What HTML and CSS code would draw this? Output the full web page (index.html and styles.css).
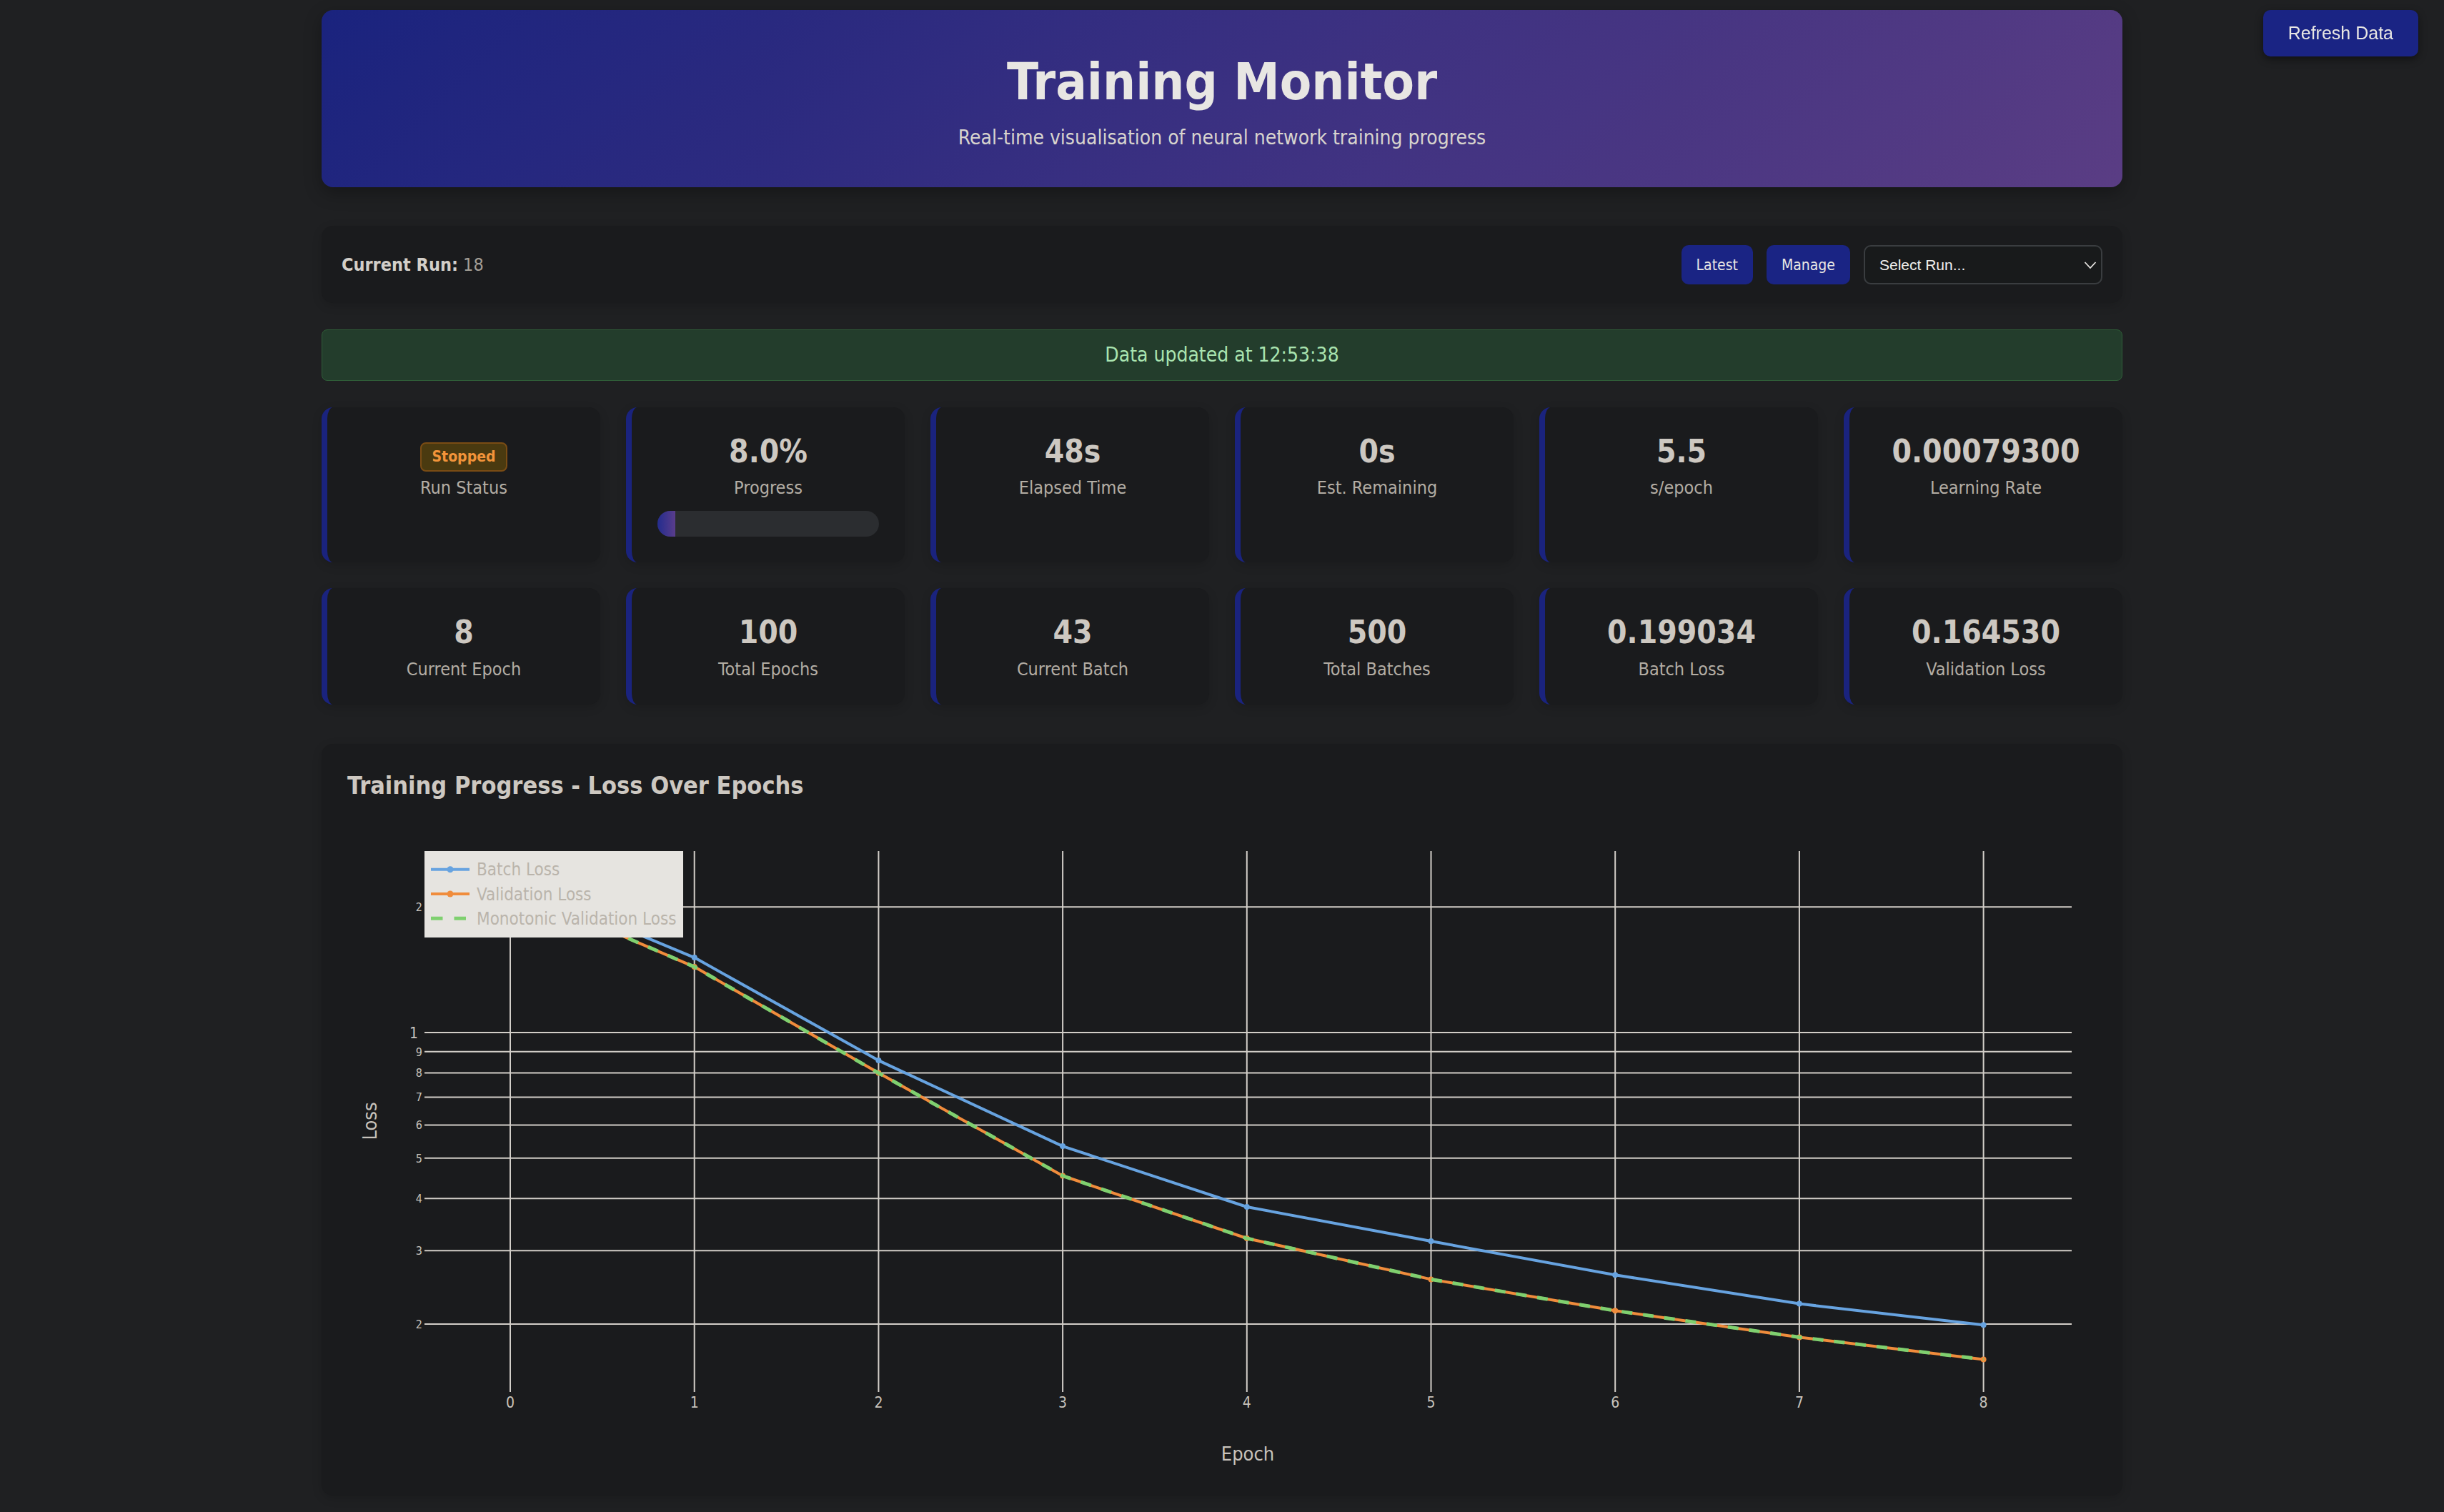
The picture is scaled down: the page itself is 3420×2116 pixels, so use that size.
FILE: index.html
```html
<!DOCTYPE html>
<html lang="en">
<head>
<meta charset="utf-8">
<title>Training Monitor</title>
<link rel="stylesheet" href="styles.css">
</head>
<body>
<button class="refresh-btn">Refresh Data</button>
<div class="container">
  <header class="header">
    <h1 class="title">Training Monitor</h1>
    <p class="subtitle">Real-time visualisation of neural network training progress</p>
  </header>

  <section class="run-bar">
    <div class="run-info"><strong>Current Run:</strong> <span class="run-id">18</span></div>
    <div class="run-controls">
      <button class="btn">Latest</button>
      <button class="btn">Manage</button>
      <div class="select-box">
        <span>Select Run...</span>
        <svg class="chevron" width="18" height="12" viewBox="0 0 18 12"><path d="M1.5 2 L9 10 L16.5 2" fill="none" stroke="#e8e6e3" stroke-width="1.8"/></svg>
      </div>
    </div>
  </section>

  <div class="status-bar">Data updated at 12:53:38</div>

  <div class="stats-grid stats-primary">
    <div class="stat-card">
      <div class="badge-wrap"><span class="badge">Stopped</span></div>
      <div class="stat-label">Run Status</div>
    </div>
    <div class="stat-card">
      <div class="stat-value">8.0%</div>
      <div class="stat-label">Progress</div>
      <div class="progress-track"><div class="progress-fill" style="width: 8%"></div></div>
    </div>
    <div class="stat-card">
      <div class="stat-value">48s</div>
      <div class="stat-label">Elapsed Time</div>
    </div>
    <div class="stat-card">
      <div class="stat-value">0s</div>
      <div class="stat-label">Est. Remaining</div>
    </div>
    <div class="stat-card">
      <div class="stat-value">5.5</div>
      <div class="stat-label">s/epoch</div>
    </div>
    <div class="stat-card">
      <div class="stat-value">0.00079300</div>
      <div class="stat-label">Learning Rate</div>
    </div>
  </div>

  <div class="stats-grid stats-secondary">
    <div class="stat-card">
      <div class="stat-value">8</div>
      <div class="stat-label">Current Epoch</div>
    </div>
    <div class="stat-card">
      <div class="stat-value">100</div>
      <div class="stat-label">Total Epochs</div>
    </div>
    <div class="stat-card">
      <div class="stat-value">43</div>
      <div class="stat-label">Current Batch</div>
    </div>
    <div class="stat-card">
      <div class="stat-value">500</div>
      <div class="stat-label">Total Batches</div>
    </div>
    <div class="stat-card">
      <div class="stat-value">0.199034</div>
      <div class="stat-label">Batch Loss</div>
    </div>
    <div class="stat-card">
      <div class="stat-value">0.164530</div>
      <div class="stat-label">Validation Loss</div>
    </div>
  </div>

  <section class="chart-card">
    <h3 class="chart-title">Training Progress - Loss Over Epochs</h3>
    <svg class="chart" width="2448" height="916" viewBox="0 0 2448 916">
      <path class="grid" d="M108 128.3H2413 M108 304H2413 M108 330.7H2413 M108 360.6H2413 M108 394.4H2413 M108 433.5H2413 M108 479.7H2413 M108 536.3H2413 M108 609.2H2413 M108 712H2413
        M228 50V807 M485.7 50V807 M743.4 50V807 M1001.1 50V807 M1258.8 50V807 M1516.5 50V807 M1774.2 50V807 M2031.9 50V807 M2289.6 50V807"/>

      <g class="ytick">
        <text class="minor" x="105" y="134">2</text>
        <text class="major" x="99" y="311.6">1</text>
        <text class="minor" x="105" y="336.5">9</text>
        <text class="minor" x="105" y="366.4">8</text>
        <text class="minor" x="105" y="400.2">7</text>
        <text class="minor" x="105" y="439.3">6</text>
        <text class="minor" x="105" y="485.5">5</text>
        <text class="minor" x="105" y="542.1">4</text>
        <text class="minor" x="105" y="615">3</text>
        <text class="minor" x="105" y="717.8">2</text>
      </g>
      <g class="xtick">
        <text x="228" y="829">0</text>
        <text x="485.7" y="829">1</text>
        <text x="743.4" y="829">2</text>
        <text x="1001.1" y="829">3</text>
        <text x="1258.8" y="829">4</text>
        <text x="1516.5" y="829">5</text>
        <text x="1774.2" y="829">6</text>
        <text x="2031.9" y="829">7</text>
        <text x="2289.6" y="829">8</text>
      </g>
      <text class="axis-title" x="1260" y="903">Epoch</text>
      <text class="axis-title" transform="translate(41 428) rotate(-90)">Loss</text>

      <polyline class="line-batch" points="228,91.8 485.7,199.1 743.4,343.1 1001.1,463.1 1258.8,548 1516.5,596 1774.2,643.3 2031.9,683.6 2289.6,713.2"/>
      <g class="pts-batch">
        <circle cx="228" cy="91.8" r="4"/><circle cx="485.7" cy="199.1" r="4"/><circle cx="743.4" cy="343.1" r="4"/><circle cx="1001.1" cy="463.1" r="4"/><circle cx="1258.8" cy="548" r="4"/><circle cx="1516.5" cy="596" r="4"/><circle cx="1774.2" cy="643.3" r="4"/><circle cx="2031.9" cy="683.6" r="4"/><circle cx="2289.6" cy="713.2" r="4"/>
      </g>
      <polyline class="line-val" points="228,101 485.7,212.1 743.4,360.6 1001.1,504.5 1258.8,592 1516.5,649.4 1774.2,693.3 2031.9,730.4 2289.6,761.4"/>
      <g class="pts-val">
        <circle cx="228" cy="101" r="4"/><circle cx="485.7" cy="212.1" r="4"/><circle cx="743.4" cy="360.6" r="4"/><circle cx="1001.1" cy="504.5" r="4"/><circle cx="1258.8" cy="592" r="4"/><circle cx="1516.5" cy="649.4" r="4"/><circle cx="1774.2" cy="693.3" r="4"/><circle cx="2031.9" cy="730.4" r="4"/><circle cx="2289.6" cy="761.4" r="4"/>
      </g>
      <polyline class="line-mono" points="228,101 485.7,212.1 743.4,360.6 1001.1,504.5 1258.8,592 1516.5,649.4 1774.2,693.3 2031.9,730.4 2289.6,761.4"/>

      <g class="legend">
        <rect class="legend-bg" x="108" y="50" width="362" height="121"/>
        <line class="line-batch" x1="117" y1="75.7" x2="171" y2="75.7"/>
        <circle class="dot-batch" cx="144" cy="75.7" r="4.5"/>
        <text class="legend-text" x="181" y="84">Batch Loss</text>
        <line class="line-val" x1="117" y1="110" x2="171" y2="110"/>
        <circle class="dot-val" cx="144" cy="110" r="4.5"/>
        <text class="legend-text" x="181" y="118.5">Validation Loss</text>
        <line class="line-mono legend-dash" x1="117" y1="144.3" x2="171" y2="144.3"/>
        <text class="legend-text" x="181" y="152.7">Monotonic Validation Loss</text>
      </g>
    </svg>
  </section>
</div>
</body>
</html>
```

FILE: styles.css
```css
* {
  box-sizing: border-box;
}

html,
body {
  margin: 0;
}

body {
  background: #1f2022;
  color: #e8e6e3;
  font-family: "DejaVu Sans Condensed", "DejaVu Sans", sans-serif;
}

.container {
  width: 2520px;
  margin: 0 auto;
  padding: 14px 0 24px;
}

/* Floating refresh button */
.refresh-btn {
  position: fixed;
  top: 14px;
  right: 36px;
  height: 65px;
  padding: 0 35px;
  border: none;
  border-radius: 10px;
  background: #1a2484;
  color: #e8e6e3;
  font-family: "Liberation Sans", Arial, sans-serif;
  font-size: 25px;
  box-shadow: 0 4px 12px rgba(0, 0, 0, 0.45);
}

/* Header */
.header {
  background: linear-gradient(135deg, #1a237e 0%, #5a3d84 100%);
  border-radius: 16px;
  padding: 56px 40px 53px;
  text-align: center;
  box-shadow: 0 8px 24px rgba(0, 0, 0, 0.3);
}

.title {
  margin: 0 0 17px;
  font-size: 72px;
  line-height: 88.8px;
  font-weight: 700;
  color: #e8e6e3;
}

.subtitle {
  margin: 0;
  font-size: 28px;
  line-height: 33.6px;
  color: #d8d4ce;
}

/* Run bar */
.run-bar {
  margin-top: 54px;
  background: #1a1b1d;
  border-radius: 16px;
  padding: 27px 28px 26px;
  display: flex;
  align-items: center;
  justify-content: space-between;
  box-shadow: 0 4px 14px rgba(0, 0, 0, 0.15);
}

.run-info {
  font-size: 25px;
  color: #a39e95;
}

.run-info strong {
  color: #d3cfc9;
}

.run-controls {
  display: flex;
  align-items: center;
  gap: 19px;
}

.btn {
  height: 55px;
  padding: 0 21px;
  border: none;
  border-radius: 10px;
  background: #1a2484;
  color: #e8e6e3;
  font-family: "DejaVu Sans Condensed", "DejaVu Sans", sans-serif;
  font-size: 21px;
}

.select-box {
  width: 334px;
  height: 55px;
  border: 2px solid #3a3d40;
  border-radius: 10px;
  background: #181a1b;
  display: flex;
  align-items: center;
  justify-content: space-between;
  padding: 0 6px 0 20px;
  font-family: "Liberation Sans", Arial, sans-serif;
  font-size: 21px;
  color: #f2f0ed;
}

.chevron {
  display: block;
}

/* Status */
.status-bar {
  margin-top: 37px;
  background: #233d2c;
  border: 1px solid #2f5d38;
  border-radius: 8px;
  padding: 18px;
  text-align: center;
  font-size: 28px;
  line-height: 34px;
  color: #a9e4b0;
}

/* Stat cards */
.stats-grid {
  display: grid;
  grid-template-columns: repeat(6, 1fr);
  gap: 36px;
}

.stats-primary {
  margin-top: 37px;
}

.stats-secondary {
  margin-top: 36px;
}

.stat-card {
  background: #1a1b1d;
  border-left: 8px solid #1a237e;
  border-radius: 16px;
  padding: 36px 36px 34px;
  text-align: center;
  box-shadow: 0 4px 14px rgba(0, 0, 0, 0.15);
}

.stats-primary .stat-card {
  padding-bottom: 36px;
}

.stat-value {
  font-size: 44px;
  line-height: 52.8px;
  font-weight: 700;
  color: #cdc8c1;
  margin-bottom: 9px;
}

.stats-secondary .stat-value {
  margin-bottom: 10px;
}

.stat-label {
  font-size: 25px;
  line-height: 30px;
  color: #b3ada4;
}

.badge-wrap {
  height: 61.8px;
  display: flex;
  justify-content: center;
  align-items: flex-start;
  padding-top: 13px;
}

.badge {
  display: inline-block;
  height: 41px;
  padding: 0 14px;
  border: 2px solid #7a4c14;
  border-radius: 8px;
  background: #4a3a10;
  color: #f2943a;
  font-weight: 700;
  font-size: 21px;
  line-height: 37px;
}

.progress-track {
  margin-top: 17px;
  height: 36px;
  border-radius: 18px;
  background: #2b2d30;
  overflow: hidden;
}

.progress-fill {
  height: 100%;
  background: linear-gradient(90deg, #232c8e, #5a3d8c);
}

/* Chart */
.chart-card {
  margin-top: 55px;
  background: #1a1b1d;
  border-radius: 16px;
  padding: 37px 36px 36px;
  box-shadow: 0 4px 14px rgba(0, 0, 0, 0.15);
}

.chart-title {
  margin: 0 0 21px;
  font-size: 34px;
  line-height: 42px;
  font-weight: 700;
  color: #cdc8c1;
}

.chart {
  display: block;
}

.chart .grid {
  fill: none;
  stroke: #d2cec8;
  stroke-width: 2;
}

.chart text {
  font-family: "DejaVu Sans Condensed", "DejaVu Sans", sans-serif;
  fill: #c8c3bc;
}

.ytick text {
  text-anchor: end;
}

.ytick .major {
  font-size: 21px;
}

.ytick .minor {
  font-size: 16px;
}

.xtick text {
  text-anchor: middle;
  font-size: 21px;
}

.chart .axis-title {
  text-anchor: middle;
  font-size: 27px;
}

.line-batch {
  fill: none;
  stroke: #67a3e0;
  stroke-width: 4;
  stroke-linejoin: round;
}

.line-val {
  fill: none;
  stroke: #f08c3c;
  stroke-width: 4;
  stroke-linejoin: round;
}

.line-mono {
  fill: none;
  stroke: #7fd06f;
  stroke-width: 5;
  stroke-dasharray: 15 15;
}

.legend-dash {
  stroke-dasharray: 16.5 16;
}

.pts-batch circle,
.dot-batch {
  fill: #67a3e0;
}

.pts-val circle,
.dot-val {
  fill: #f08c3c;
}

.legend-bg {
  fill: #e6e4e0;
}

.chart .legend-text {
  font-size: 24px;
  fill: #bab4ab;
}
```
